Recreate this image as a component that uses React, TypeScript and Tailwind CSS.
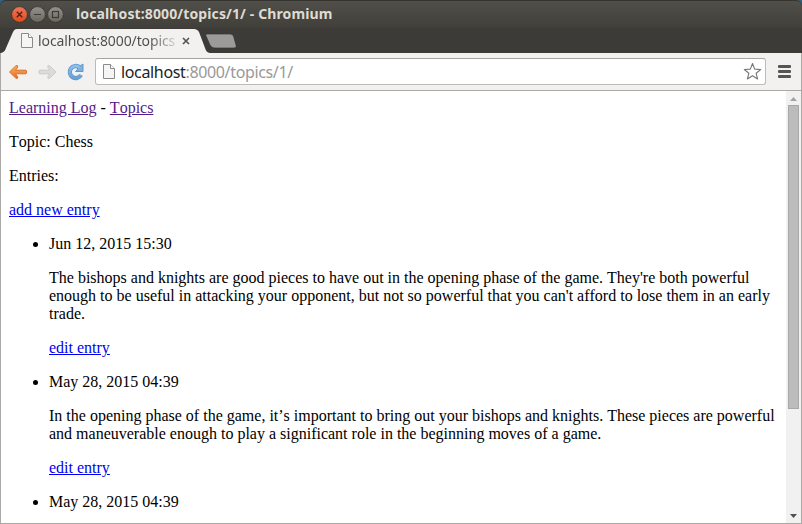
import React from "react";

function PageIcon({ className }: { className?: string }) {
  return (
    <svg width="12" height="15" viewBox="0 0 12 15" className={className}>
      <path d="M.5 .5H7.5L11.5 4.5V14.5H.5Z" fill="#f5f5f5" stroke="#8a8a8a" />
      <path d="M7.5 .5V4.5H11.5" fill="#fff" stroke="#8a8a8a" />
    </svg>
  );
}

function WindowButtons() {
  return (
    <svg width="54" height="18" viewBox="0 0 54 18" className="ml-[10px] mt-[4px] shrink-0">
      <defs>
        <linearGradient id="close" x2="0" y2="1">
          <stop stopColor="#f37458" />
          <stop offset="1" stopColor="#df4b1b" />
        </linearGradient>
        <linearGradient id="gray" x2="0" y2="1">
          <stop stopColor="#94928a" />
          <stop offset="1" stopColor="#68665f" />
        </linearGradient>
      </defs>
      <circle cx="9.5" cy="9.5" r="7.9" fill="url(#close)" stroke="#34322d" strokeWidth=".8" />
      <circle cx="27.5" cy="9.5" r="7.9" fill="url(#gray)" stroke="#34322d" strokeWidth=".8" />
      <circle cx="45.5" cy="9.5" r="7.9" fill="url(#gray)" stroke="#34322d" strokeWidth=".8" />
      <path d="M6.8 6.8L12.2 12.2M12.2 6.8L6.8 12.2" stroke="#512113" strokeWidth="1.4" />
      <path d="M24 9.5H31" stroke="#3c3b37" strokeWidth="1.2" />
      <rect x="42.5" y="6.5" width="6" height="6" fill="none" stroke="#3c3b37" strokeWidth="1.2" />
    </svg>
  );
}

function TitleBar() {
  return (
    <div className="flex h-7 rounded-t-[6px] border-t border-[#35342f] bg-linear-to-b from-[#504f49] to-[#403f3a]">
      <WindowButtons />
      <span className="ml-3 mt-[3px] whitespace-nowrap font-['Noto_Sans',sans-serif] text-[14px] font-bold leading-5 tracking-[0.12px] text-[#dfdbd2]">
        localhost:8000/topics/1/ - Chromium
      </span>
    </div>
  );
}

function TabStrip() {
  return (
    <div className="relative h-[25px] bg-[#3c3b37]">
      <svg width="240" height="25" viewBox="0 0 240 25" className="absolute left-px top-0">
        <path d="M0 25C3 24 4 23 5 20L12 4C13 2 14 1 16 1H193C195 1 197 2 198 4L204 20C205 23 206 24.5 209 25Z" fill="#f2f1f0" />
        <path d="M206 6H229C231 6 232 7 232.500 8L235 17C235.500 19 235 20 233 20H214C212 20 210 19 209 17L205 8C204.500 7 205 6 206 6Z" fill="#9c9b99" stroke="#343330" strokeWidth=".7" />
      </svg>
      <div className="relative flex h-full items-center">
        <PageIcon className="ml-[21px] shrink-0" />
        <span className="ml-[5px] mt-px w-[138px] overflow-hidden whitespace-nowrap bg-linear-to-r from-[#4c4c4c] from-80% to-[#d5d4d3] bg-clip-text font-['Noto_Sans',sans-serif] text-[14px] leading-5 tracking-[-0.1px] text-transparent">
          localhost:8000/topics
        </span>
        <svg width="8" height="8" viewBox="0 0 8 8" className="ml-[6px]">
          <path d="M1 1L7 7M7 1L1 7" stroke="#555" strokeWidth="1.7" />
        </svg>
      </div>
    </div>
  );
}

function NavIcons() {
  return (
    <svg width="84" height="24" viewBox="0 0 84 24" className="ml-[4px] shrink-0">
      <defs>
        <linearGradient id="orange" x2="0" y2="1">
          <stop stopColor="#f9b45e" />
          <stop offset="1" stopColor="#e76b28" />
        </linearGradient>
        <linearGradient id="blue" x2="0" y2="1">
          <stop stopColor="#8fc0ea" />
          <stop offset="1" stopColor="#68a0d8" />
        </linearGradient>
      </defs>
      <path d="M4.500 12L11 5.700Q13 5 12.800 7L10.500 10.200H21Q22.500 12 21 13.800H10.500L12.800 17Q13 19 11 18.300Z" fill="url(#orange)" stroke="#dc702c" strokeWidth="1" strokeLinejoin="round" />
      <path d="M51 12L44.500 5.700Q42.500 5 42.700 7L45 10.200H34.500Q33 12 34.500 13.800H45L42.700 17Q42.500 19 44.500 18.300Z" fill="#dddcda" stroke="#cccac8" strokeLinejoin="round" />
      <path d="M74.500 7.300A6 6 0 1 0 76 15" fill="none" stroke="#5c97d0" strokeWidth="4.300" />
      <path d="M78 4V11.500H70.500L73 9L71.500 7.500L75 6Z" fill="#7db3e3" stroke="#5c97d0" strokeLinejoin="round" />
      <path d="M74.500 7.300A6 6 0 1 0 76 15" fill="none" stroke="url(#blue)" strokeWidth="2.800" />
    </svg>
  );
}

function Toolbar() {
  return (
    <div className="flex h-[38px] items-center border-b border-[#aaa9a7] bg-[#f2f1f0]">
      <NavIcons />
      <div className="ml-[6px] flex h-[27px] w-[671px] items-center rounded-[3px] border border-[#bdbbb9] border-t-[#a6a4a2] bg-white">
        <PageIcon className="ml-[7px] shrink-0" />
        <span className="ml-[6px] whitespace-nowrap font-['Noto_Sans',sans-serif] text-[16px] leading-6 tracking-[-0.35px] text-[#222]">
          localhost<span className="text-[#999]">:8000/topics/1/</span>
        </span>
        <svg width="19" height="19" viewBox="0 0 19 19" className="ml-auto mr-[3px]">
          <path d="M9.500 1.500L11.700 7.100L17.700 7.500L13.100 11.200L14.600 17L9.500 13.800L4.400 17L5.900 11.200L1.300 7.500L7.300 7.100Z" fill="#fff" stroke="#777" strokeWidth="1.100" strokeLinejoin="round" />
        </svg>
      </div>
      <div className="ml-[12px] flex flex-col gap-[2px]">
        <i className="h-[3px] w-[13px] rounded-[1px] bg-[#555]" />
        <i className="h-[3px] w-[13px] rounded-[1px] bg-[#555]" />
        <i className="h-[3px] w-[13px] rounded-[1px] bg-[#555]" />
      </div>
    </div>
  );
}

const entries = [
  {
    date: "Jun 12, 2015 15:30",
    text: "The bishops and knights are good pieces to have out in the opening phase of the game. They're both powerful enough to be useful in attacking your opponent, but not so powerful that you can't afford to lose them in an early trade.",
  },
  {
    date: "May 28, 2015 04:39",
    text: "In the opening phase of the game, it’s important to bring out your bishops and knights. These pieces are powerful and maneuverable enough to play a significant role in the beginning moves of a game.",
  },
  { date: "May 28, 2015 04:39", text: "" },
];

function ScrollBar() {
  return (
    <div className="flex w-[15px] shrink-0 flex-col items-center bg-[#f1f1f1]">
      <svg width="15" height="14" viewBox="0 0 15 14" className="shrink-0">
        <path d="M4 10L7.500 6L11 10Z" fill="#a3a3a3" />
      </svg>
      <div className="h-[304px] w-[11px] shrink-0 border border-[#a8a8a8] bg-[#bcbcbc]" />
      <svg width="15" height="14" viewBox="0 0 15 14" className="mt-auto shrink-0">
        <path d="M4 5H11L7.500 9Z" fill="#505050" />
      </svg>
    </div>
  );
}

export default function App() {
  return (
    <div className="h-[524px] w-[802px] overflow-hidden bg-[#306080]">
      <div className="flex h-full flex-col overflow-hidden rounded-t-[6px] bg-[#3c3b37]">
        <TitleBar />
        <TabStrip />
        <div className="flex min-h-0 grow flex-col border-x border-b border-[#aaa9a5]">
          <Toolbar />
          <div className="flex min-h-0 grow bg-white">
            <main className="flex grow flex-col gap-4 overflow-hidden p-2 font-['Liberation_Serif',serif] text-[16px] leading-[18px] text-black [font-kerning:none]">
              <p>
                <a className="text-[#551a8b] underline">Learning Log</a> - <a className="text-[#551a8b] underline">Topics</a>
              </p>
              <p>Topic: Chess</p>
              <p>Entries:</p>
              <p>
                <a className="text-[#0000ee] underline">add new entry</a>
              </p>
              <ul className="flex list-disc flex-col gap-4 pl-10">
                {entries.map((entry, i) => (
                  <li key={i}>
                    <p>{entry.date}</p>
                    {entry.text && (
                      <>
                        <p className="my-4">{entry.text}</p>
                        <p>
                          <a className="text-[#0000ee] underline">edit entry</a>
                        </p>
                      </>
                    )}
                  </li>
                ))}
              </ul>
            </main>
            <ScrollBar />
          </div>
        </div>
      </div>
    </div>
  );
}
